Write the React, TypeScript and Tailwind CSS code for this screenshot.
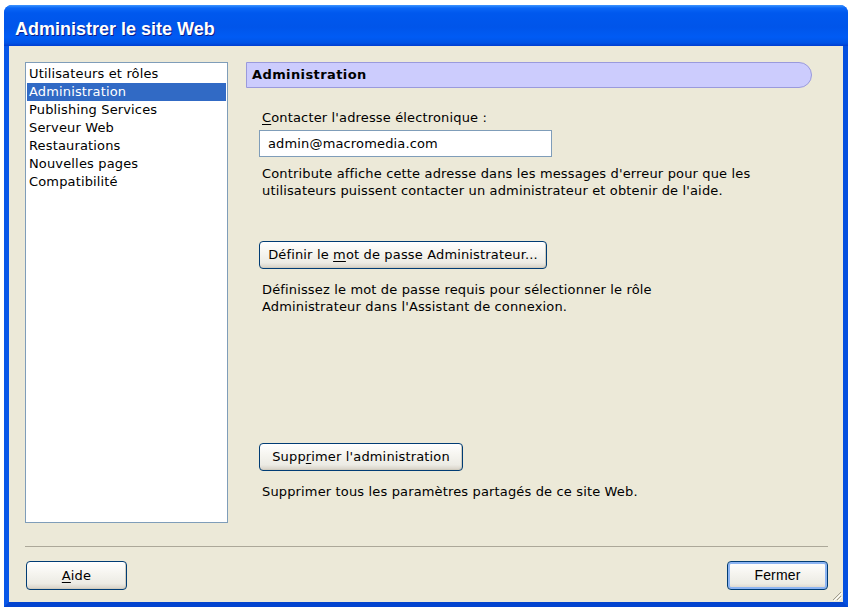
import React from "react";

const font = "font-['DejaVu_Sans',sans-serif]";

function XPButton({
  children,
  className = "",
  isDefault = false,
}: {
  children: React.ReactNode;
  className?: string;
  isDefault?: boolean;
}) {
  return (
    <div
      className={`flex items-center justify-center rounded-[4px] border border-[#003c74] bg-[linear-gradient(to_bottom,#ffffff_0%,#f6f5f0_40%,#ecebe4_80%,#d6d0c5_100%)] text-[13px] text-black ${
        isDefault ? "shadow-[inset_0_0_0_2px_#8cb4f2]" : "shadow-[inset_-1px_-1px_0_#d0ccbf]"
      } ${className}`}
    >
      {children}
    </div>
  );
}

const items = [
  "Utilisateurs et rôles",
  "Administration",
  "Publishing Services",
  "Serveur Web",
  "Restaurations",
  "Nouvelles pages",
  "Compatibilité",
];

export default function App() {
  return (
    <div className={`w-[853px] h-[614px] bg-white pt-[5px] pl-[4px] ${font}`}>
      <div className="w-[844px] h-[602px] flex flex-col rounded-t-[8px] overflow-hidden bg-[#0058ee]">
        {/* Title bar */}
        <div className="h-[41px] shrink-0 flex items-center pl-[11px] bg-[linear-gradient(to_bottom,#3d95ff_0px,#0a66f6_3px,#0058ee_8px,#0055ea_22px,#005bf4_32px,#0053e6_38px,#003dd0_41px)]">
          <span className="font-['Liberation_Sans',sans-serif] font-bold text-[18px] text-white leading-none [text-shadow:1px_1px_0_#0a1e8a] mt-[7px]">
            Administrer le site Web
          </span>
        </div>
        {/* Client frame */}
        <div className="flex-1 flex flex-col border-l-[5px] border-r-[5px] border-b-[5px] border-l-[#0756e8] border-r-[#0550df] border-b-[#0344cf]">
          <div className="relative flex-1 flex flex-col bg-[#ece9d8] pt-[16px] pl-[16px] pr-[15px] pb-[11px] text-[13px] tracking-[0.15px] text-black">
            <div className="flex">
              {/* List box */}
              <div className="w-[203px] h-[461px] shrink-0 border border-[#7f9db9] bg-white p-[1px] pt-[2px]">
                {items.map((it, i) => (
                  <div
                    key={it}
                    className={`h-[18px] leading-[18px] pl-[2px] whitespace-nowrap ${
                      i === 1 ? "bg-[#316ac5] text-white" : ""
                    }`}
                  >
                    {it}
                  </div>
                ))}
              </div>
              {/* Right panel */}
              <div className="ml-[18px] flex-1 flex flex-col">
                <div className="h-[26px] mr-[16px] flex items-center pl-[5px] bg-[#ccccfd] border border-[#9a9adc] rounded-r-full font-bold tracking-[0.4px]">
                  Administration
                </div>
                <div className="pl-[13px] flex flex-col">
                  <div className="mt-[21px] leading-[17px] pl-[3px]">
                    <span className="underline underline-offset-2">C</span>ontacter l'adresse électronique :
                  </div>
                  <div className="mt-[4px] w-[293px] h-[27px] border border-[#7f9db9] bg-white flex items-center pl-[8px]">
                    admin@macromedia.com
                  </div>
                  <div className="mt-[8px] leading-[17px] pl-[3px] whitespace-nowrap">
                    Contribute affiche cette adresse dans les messages d'erreur pour que les
                    <br />
                    utilisateurs puissent contacter un administrateur et obtenir de l'aide.
                  </div>
                  <XPButton className="mt-[42px] w-[288px] h-[28px]">
                    <span>
                      Définir le <span className="underline underline-offset-2">m</span>ot de passe Administrateur...
                    </span>
                  </XPButton>
                  <div className="mt-[12px] leading-[17px] pl-[3px] whitespace-nowrap">
                    Définissez le mot de passe requis pour sélectionner le rôle
                    <br />
                    Administrateur dans l'Assistant de connexion.
                  </div>
                  <XPButton className="mt-[128px] w-[204px] h-[28px]">
                    <span>
                      Supp<span className="underline underline-offset-2">r</span>imer l'administration
                    </span>
                  </XPButton>
                  <div className="mt-[12px] leading-[17px] pl-[3px] whitespace-nowrap">
                    Supprimer tous les paramètres partagés de ce site Web.
                  </div>
                </div>
              </div>
            </div>
            {/* Separator */}
            <div className="mt-[23px] h-px bg-[#aca899]" />
            {/* Bottom buttons */}
            <div className="mt-[14px] flex justify-between">
              <XPButton className="ml-[1px] w-[101px] h-[29px]">
                <span>
                  <span className="underline underline-offset-2">A</span>ide
                </span>
              </XPButton>
              <XPButton isDefault className="w-[101px] h-[29px] font-['Liberation_Sans',sans-serif] text-[14px]">
                Fermer
              </XPButton>
            </div>
            {/* Resize grip */}
            <svg className="absolute right-[1px] bottom-[1px]" width="12" height="12" viewBox="0 0 12 12">
              <line x1="11" y1="3" x2="3" y2="11" stroke="#a09d8e" strokeWidth="1" />
              <line x1="11" y1="7" x2="7" y2="11" stroke="#a09d8e" strokeWidth="1" />
              <line x1="12" y1="4" x2="4" y2="12" stroke="#ffffff" strokeWidth="1" />
              <line x1="12" y1="8" x2="8" y2="12" stroke="#ffffff" strokeWidth="1" />
            </svg>
          </div>
        </div>
      </div>
    </div>
  );
}
